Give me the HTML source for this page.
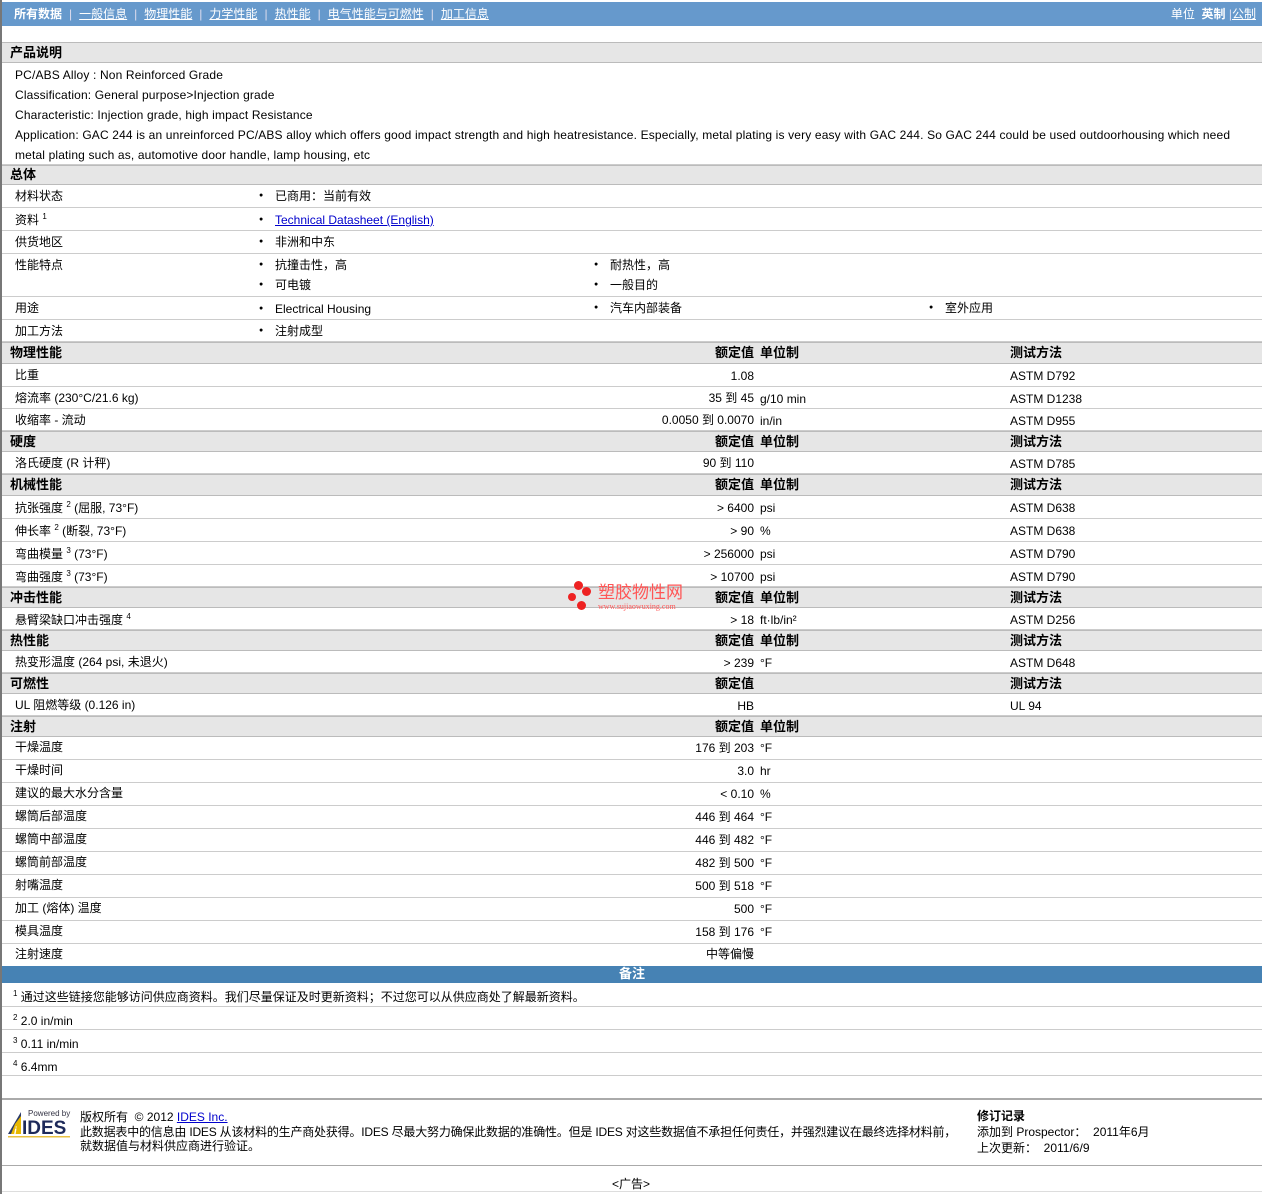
<!DOCTYPE html>
<html><head><meta charset="utf-8"><style>
*{margin:0;padding:0;box-sizing:border-box}
body{width:1262px;height:1194px;background:#fff;position:relative;overflow:hidden;font-family:"Liberation Sans","Noto Sans CJK SC",sans-serif;font-size:12px;color:#000}
.lb{position:absolute;left:0;top:0;width:2px;height:1194px;background:#777}
.nav{position:absolute;left:2px;right:0;top:2px;height:24px;background:#6699cc;color:#fff;font-size:12px;line-height:24px}
.nav a{color:#fff;text-decoration:underline}
.nav .s{color:#dde;margin:0 7px}
.h{position:absolute;left:2px;right:0;background:#e6e6e6;border-top:1px solid #bbb;border-bottom:1px solid #bbb;font-weight:bold;font-size:13px}
.r{position:absolute;left:2px;right:0;border-bottom:1px solid #ccc}
.t{position:absolute;white-space:nowrap;line-height:14px}
.v{position:absolute;right:508px;white-space:nowrap;text-align:right}
.u{position:absolute;left:758px;white-space:nowrap}
.m{position:absolute;left:1008px;white-space:nowrap}
.b::before{content:"●";position:absolute;left:-16px;top:0;font-size:7px}
sup{font-size:8px;line-height:0;vertical-align:0;position:relative;top:-5px}
a{color:#00c}
.d{letter-spacing:0.15px}
</style></head><body>
<div class="lb"></div>
<div class="nav"><span style="position:absolute;left:12px"><b>所有数据</b><span class="s">|</span><a>一般信息</a><span class="s">|</span><a>物理性能</a><span class="s">|</span><a>力学性能</a><span class="s">|</span><a>热性能</a><span class="s">|</span><a>电气性能与可燃性</a><span class="s">|</span><a>加工信息</a></span>
<span style="position:absolute;right:6px">单位 &nbsp;<b>英制</b> <span style="color:#dde">|</span><a>公制</a></span></div>

<div class="h" style="top:42px;height:21px"><span class="t" style="left:8px;top:3px">产品说明</span></div>
<div class="r d" style="top:63px;height:102px">
<div class="t" style="left:13px;top:5px">PC/ABS Alloy : Non Reinforced Grade</div>
<div class="t" style="left:13px;top:25px">Classification: General purpose&gt;Injection grade</div>
<div class="t" style="left:13px;top:45px">Characteristic: Injection grade, high impact Resistance</div>
<div class="t" style="left:13px;top:65px">Application: GAC 244 is an unreinforced PC/ABS alloy which offers good impact strength and high heatresistance. Especially, metal plating is very easy with GAC 244. So GAC 244 could be used outdoorhousing which need</div>
<div class="t" style="left:13px;top:85px">metal plating such as, automotive door handle, lamp housing, etc</div></div>

<div class="h" style="top:165px;height:20px"><span class="t" style="left:8px;top:2px">总体</span></div>
<div class="r" style="top:185px;height:23px"><span class="t" style="left:13px;top:4px">材料状态</span><span class="t b" style="left:273px;top:4px">已商用：当前有效</span></div>
<div class="r" style="top:208px;height:23px"><span class="t" style="left:13px;top:5px">资料 <sup>1</sup></span><span class="t b" style="left:273px;top:5px"><a style="text-decoration:underline">Technical Datasheet (English)</a></span></div>
<div class="r" style="top:231px;height:23px"><span class="t" style="left:13px;top:4px">供货地区</span><span class="t b" style="left:273px;top:4px">非洲和中东</span></div>
<div class="r" style="top:254px;height:43px"><span class="t" style="left:13px;top:4px">性能特点</span><span class="t b" style="left:273px;top:4px">抗撞击性，高</span><span class="t b" style="left:608px;top:4px">耐热性，高</span><span class="t b" style="left:273px;top:24px">可电镀</span><span class="t b" style="left:608px;top:24px">一般目的</span></div>
<div class="r" style="top:297px;height:23px"><span class="t" style="left:13px;top:4px">用途</span><span class="t b" style="left:273px;top:5px">Electrical Housing</span><span class="t b" style="left:608px;top:4px">汽车内部装备</span><span class="t b" style="left:943px;top:4px">室外应用</span></div>
<div class="r" style="top:320px;height:22px"><span class="t" style="left:13px;top:4px">加工方法</span><span class="t b" style="left:273px;top:4px">注射成型</span></div>

<div class="h" style="top:342px;height:22px"><span class="t" style="left:8px;top:3px">物理性能</span><span class="t v" style="top:3px">额定值</span><span class="t u" style="top:3px">单位制</span><span class="t m" style="top:3px">测试方法</span></div>
<div class="r" style="top:364px;height:23px"><span class="t" style="left:13px;top:4px">比重</span><span class="t v" style="top:5px">1.08</span><span class="t m" style="top:5px">ASTM D792</span></div>
<div class="r" style="top:387px;height:22px"><span class="t" style="left:13px;top:4px">熔流率 (230°C/21.6 kg)</span><span class="t v" style="top:4px">35 到 45</span><span class="t u" style="top:5px">g/10 min</span><span class="t m" style="top:5px">ASTM D1238</span></div>
<div class="r" style="top:409px;height:22px"><span class="t" style="left:13px;top:4px">收缩率 - 流动</span><span class="t v" style="top:4px">0.0050 到 0.0070</span><span class="t u" style="top:5px">in/in</span><span class="t m" style="top:5px">ASTM D955</span></div>

<div class="h" style="top:431px;height:21px"><span class="t" style="left:8px;top:3px">硬度</span><span class="t v" style="top:3px">额定值</span><span class="t u" style="top:3px">单位制</span><span class="t m" style="top:3px">测试方法</span></div>
<div class="r" style="top:452px;height:22px"><span class="t" style="left:13px;top:4px">洛氏硬度 (R 计秤)</span><span class="t v" style="top:4px">90 到 110</span><span class="t m" style="top:5px">ASTM D785</span></div>

<div class="h" style="top:474px;height:22px"><span class="t" style="left:8px;top:3px">机械性能</span><span class="t v" style="top:3px">额定值</span><span class="t u" style="top:3px">单位制</span><span class="t m" style="top:3px">测试方法</span></div>
<div class="r" style="top:496px;height:23px"><span class="t" style="left:13px;top:5px">抗张强度 <sup>2</sup> (屈服, 73°F)</span><span class="t v" style="top:5px">&gt; 6400</span><span class="t u" style="top:5px">psi</span><span class="t m" style="top:5px">ASTM D638</span></div>
<div class="r" style="top:519px;height:23px"><span class="t" style="left:13px;top:5px">伸长率 <sup>2</sup> (断裂, 73°F)</span><span class="t v" style="top:5px">&gt; 90</span><span class="t u" style="top:5px">%</span><span class="t m" style="top:5px">ASTM D638</span></div>
<div class="r" style="top:542px;height:23px"><span class="t" style="left:13px;top:5px">弯曲模量 <sup>3</sup> (73°F)</span><span class="t v" style="top:5px">&gt; 256000</span><span class="t u" style="top:5px">psi</span><span class="t m" style="top:5px">ASTM D790</span></div>
<div class="r" style="top:565px;height:22px"><span class="t" style="left:13px;top:5px">弯曲强度 <sup>3</sup> (73°F)</span><span class="t v" style="top:5px">&gt; 10700</span><span class="t u" style="top:5px">psi</span><span class="t m" style="top:5px">ASTM D790</span></div>

<div class="h" style="top:587px;height:21px"><span class="t" style="left:8px;top:3px">冲击性能</span><span class="t v" style="top:3px">额定值</span><span class="t u" style="top:3px">单位制</span><span class="t m" style="top:3px">测试方法</span></div>
<div class="r" style="top:608px;height:22px"><span class="t" style="left:13px;top:5px">悬臂梁缺口冲击强度 <sup>4</sup></span><span class="t v" style="top:5px">&gt; 18</span><span class="t u" style="top:5px">ft·lb/in²</span><span class="t m" style="top:5px">ASTM D256</span></div>

<div class="h" style="top:630px;height:21px"><span class="t" style="left:8px;top:3px">热性能</span><span class="t v" style="top:3px">额定值</span><span class="t u" style="top:3px">单位制</span><span class="t m" style="top:3px">测试方法</span></div>
<div class="r" style="top:651px;height:22px"><span class="t" style="left:13px;top:4px">热变形温度 (264 psi, 未退火)</span><span class="t v" style="top:5px">&gt; 239</span><span class="t u" style="top:5px">°F</span><span class="t m" style="top:5px">ASTM D648</span></div>

<div class="h" style="top:673px;height:21px"><span class="t" style="left:8px;top:3px">可燃性</span><span class="t v" style="top:3px">额定值</span><span class="t m" style="top:3px">测试方法</span></div>
<div class="r" style="top:694px;height:22px"><span class="t" style="left:13px;top:4px">UL 阻燃等级 (0.126 in)</span><span class="t v" style="top:5px">HB</span><span class="t m" style="top:5px">UL 94</span></div>

<div class="h" style="top:716px;height:21px"><span class="t" style="left:8px;top:3px">注射</span><span class="t v" style="top:3px">额定值</span><span class="t u" style="top:3px">单位制</span></div>
<div class="r" style="top:737px;height:23px"><span class="t" style="left:13px;top:3px">干燥温度</span><span class="t v" style="top:4px">176 到 203</span><span class="t u" style="top:4px">°F</span></div>
<div class="r" style="top:760px;height:23px"><span class="t" style="left:13px;top:3px">干燥时间</span><span class="t v" style="top:4px">3.0</span><span class="t u" style="top:4px">hr</span></div>
<div class="r" style="top:783px;height:23px"><span class="t" style="left:13px;top:3px">建议的最大水分含量</span><span class="t v" style="top:4px">&lt; 0.10</span><span class="t u" style="top:4px">%</span></div>
<div class="r" style="top:806px;height:23px"><span class="t" style="left:13px;top:3px">螺筒后部温度</span><span class="t v" style="top:4px">446 到 464</span><span class="t u" style="top:4px">°F</span></div>
<div class="r" style="top:829px;height:23px"><span class="t" style="left:13px;top:3px">螺筒中部温度</span><span class="t v" style="top:4px">446 到 482</span><span class="t u" style="top:4px">°F</span></div>
<div class="r" style="top:852px;height:23px"><span class="t" style="left:13px;top:3px">螺筒前部温度</span><span class="t v" style="top:4px">482 到 500</span><span class="t u" style="top:4px">°F</span></div>
<div class="r" style="top:875px;height:23px"><span class="t" style="left:13px;top:3px">射嘴温度</span><span class="t v" style="top:4px">500 到 518</span><span class="t u" style="top:4px">°F</span></div>
<div class="r" style="top:898px;height:23px"><span class="t" style="left:13px;top:3px">加工 (熔体) 温度</span><span class="t v" style="top:4px">500</span><span class="t u" style="top:4px">°F</span></div>
<div class="r" style="top:921px;height:23px"><span class="t" style="left:13px;top:3px">模具温度</span><span class="t v" style="top:4px">158 到 176</span><span class="t u" style="top:4px">°F</span></div>
<div class="r" style="top:944px;height:22px;border:none"><span class="t" style="left:13px;top:3px">注射速度</span><span class="t v" style="top:3px">中等偏慢</span></div>

<div style="position:absolute;left:2px;right:0;top:966px;height:17px;background:#4682b4;color:#fff;font-weight:bold;font-size:13px;text-align:center;line-height:16px">备注</div>
<div class="r" style="top:983px;height:24px"><span class="t" style="left:11px;top:7px"><sup>1</sup> 通过这些链接您能够访问供应商资料。我们尽量保证及时更新资料；不过您可以从供应商处了解最新资料。</span></div>
<div class="r" style="top:1007px;height:23px"><span class="t" style="left:11px;top:7px"><sup>2</sup> 2.0 in/min</span></div>
<div class="r" style="top:1030px;height:23px"><span class="t" style="left:11px;top:7px"><sup>3</sup> 0.11 in/min</span></div>
<div class="r" style="top:1053px;height:23px"><span class="t" style="left:11px;top:7px"><sup>4</sup> 6.4mm</span></div>

<div style="position:absolute;left:2px;right:0;top:1098px;border-top:2px solid #aaa"></div>
<svg style="position:absolute;left:7px;top:1108px" width="64" height="30" viewBox="0 0 64 30">
<text x="21" y="8" font-size="8" fill="#334" font-family="Liberation Sans">Powered by</text>
<polygon points="1,26 14,4 14,26" fill="#2a3a6a"/><polygon points="8,16 14,8 14,26 4,26" fill="#e8b800"/>
<text x="7" y="26" font-size="10" font-weight="bold" fill="#fff" font-family="Liberation Sans" font-style="italic">i</text>
<text x="15" y="26" font-size="19" font-weight="bold" fill="#1e2a5a" font-family="Liberation Sans">IDES</text>
<rect x="1" y="28" width="62" height="1.5" fill="#e8c040"/></svg>
<div class="t" style="left:80px;top:1110px">版权所有 &nbsp;© 2012 <a style="text-decoration:underline">IDES Inc.</a></div>
<div class="t" style="left:80px;top:1125px;letter-spacing:-0.2px">此数据表中的信息由 IDES 从该材料的生产商处获得。IDES 尽最大努力确保此数据的准确性。但是 IDES 对这些数据值不承担任何责任，并强烈建议在最终选择材料前，</div>
<div class="t" style="left:80px;top:1139px">就数据值与材料供应商进行验证。</div>
<div class="t" style="left:977px;top:1109px;font-weight:bold">修订记录</div>
<div class="t" style="left:977px;top:1125px">添加到 Prospector： &nbsp;2011年6月</div>
<div class="t" style="left:977px;top:1141px">上次更新： &nbsp;2011/6/9</div>
<div style="position:absolute;left:2px;right:0;top:1165px;border-top:1px solid #aaa"></div>
<div class="t" style="left:612px;top:1177px">&lt;广告&gt;</div>
<div style="position:absolute;left:2px;right:0;top:1191px;border-top:1px solid #ddd"></div>

<div style="position:absolute;left:568px;top:579px;width:30px;height:34px">
<div style="position:absolute;left:6px;top:2px;width:9px;height:9px;border-radius:50%;background:#e22"></div>
<div style="position:absolute;left:14px;top:8px;width:9px;height:9px;border-radius:50%;background:#e22"></div>
<div style="position:absolute;left:0;top:14px;width:8px;height:8px;border-radius:50%;background:#e22"></div>
<div style="position:absolute;left:9px;top:22px;width:9px;height:9px;border-radius:50%;background:#e22"></div></div>
<div class="t" style="left:598px;top:584px;font-size:17px;color:#f55;line-height:18px">塑胶物性网</div>
<div class="t" style="left:598px;top:602px;font-size:8px;color:#f55;font-family:'Liberation Serif',serif;line-height:9px">www.sujiaowuxing.com</div>
</body></html>
